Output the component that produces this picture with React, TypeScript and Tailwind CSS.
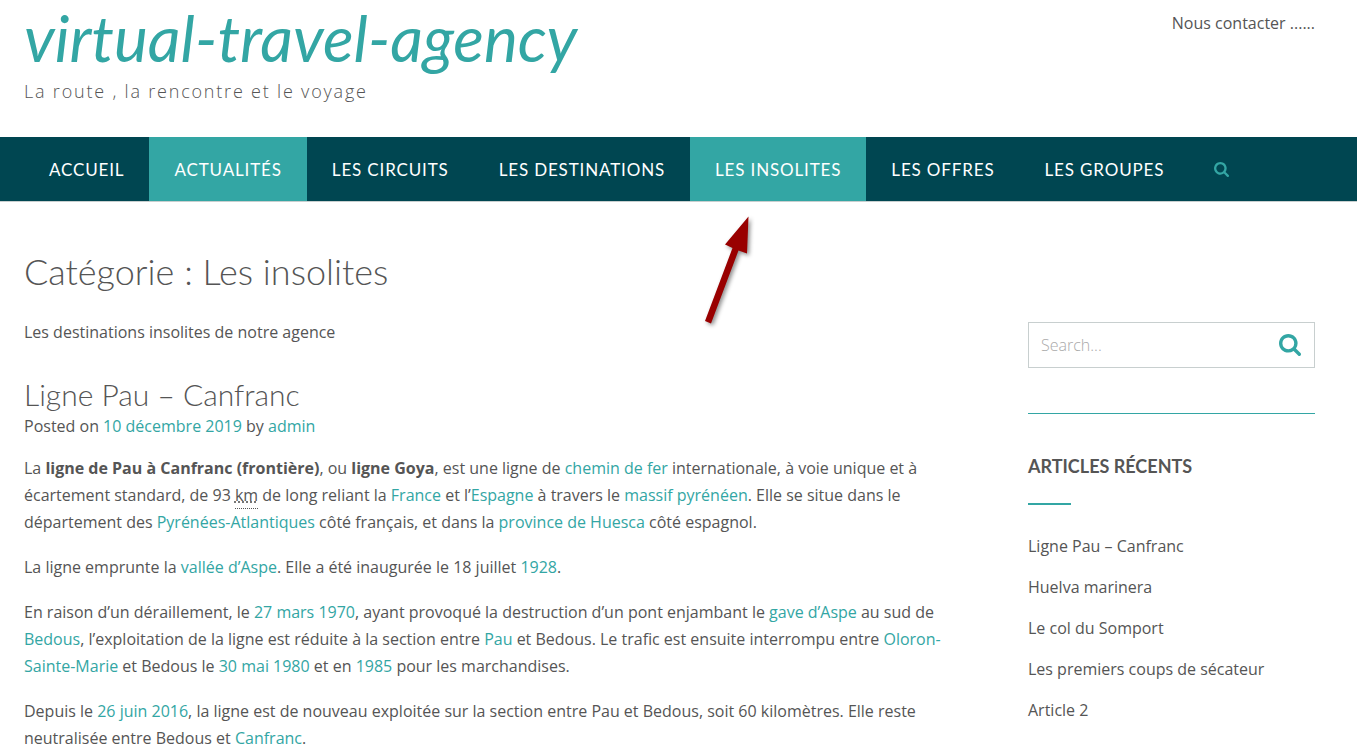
import type { ReactNode } from 'react'
import { clsx } from 'clsx'

const menu = [
  { label: 'Accueil', active: false },
  { label: 'Actualités', active: true },
  { label: 'Les circuits', active: false },
  { label: 'Les destinations', active: false },
  { label: 'Les insolites', active: true },
  { label: 'Les offres', active: false },
  { label: 'Les groupes', active: false },
]

const recentPosts = [
  'Ligne Pau – Canfranc',
  'Huelva marinera',
  'Le col du Somport',
  'Les premiers coups de sécateur',
  'Article 2',
]

function SearchIcon({ className }: { className?: string }) {
  return (
    <svg className={className} viewBox="64 128 1664 1664" fill="currentColor" aria-hidden="true">
      <path d="M1216 832q0-185-131.5-316.5t-316.5-131.5-316.5 131.5-131.5 316.5 131.5 316.5 316.5 131.5 316.5-131.5 131.5-316.5zm512 832q0 52-38 90t-90 38q-54 0-90-38l-343-342q-179 124-399 124-143 0-273.5-55.5t-225-150-150-225-55.5-273.5 55.5-273.5 150-225 225-150 273.5-55.5 273.5 55.5 225 150 150 225 55.5 273.5q0 220-124 399l343 343q37 37 37 90z" />
    </svg>
  )
}

function Arrow() {
  return (
    <svg
      className="pointer-events-none absolute top-[213px] left-[698px] h-[116px] w-[60px] drop-shadow-[2px_2px_2px_rgba(0,0,0,0.45)]"
      viewBox="698 213 60 116"
      fill="#990000"
      aria-hidden="true"
    >
      <path d="M748.5 216.5 L747 253.5 L738.5 250.5 L711 323.5 L705 321 L732.5 248 L725 244.5 Z" />
    </svg>
  )
}

function Link({ children }: { children: ReactNode }) {
  return (
    <a href="#" className="text-[#33a6a4] hover:underline">
      {children}
    </a>
  )
}

function Header() {
  return (
    <header>
      <div className="flex items-start justify-between pt-1 pr-[42px] pb-[31px] pl-6">
        <div>
          <h1 className="font-['Lato',sans-serif] text-[64px] leading-[68px] text-[#33a6a4] italic">
            <a href="#">virtual-travel-agency</a>
          </h1>
          <p className="mt-[5px] text-[18px] leading-[29px] font-light tracking-widest">
            La route , la rencontre et le voyage
          </p>
        </div>
        <p className="pt-[6px]">Nous contacter ......</p>
      </div>
      <nav className="flex h-[65px] border-b border-[#c8cfcf] bg-[#004651] pl-6">
        <ul className="flex font-['Lato',sans-serif] text-[17px] tracking-wider text-white uppercase">
          {menu.map((item) => (
            <li key={item.label}>
              <a
                href="#"
                className={clsx('flex h-full items-center px-[25px] whitespace-nowrap', item.active && 'bg-[#33a6a4]')}
              >
                {item.label}
              </a>
            </li>
          ))}
        </ul>
        <button type="button" aria-label="Rechercher" className="px-[25px] text-[#33a6a4]">
          <SearchIcon className="size-[15px]" />
        </button>
      </nav>
    </header>
  )
}

function Article() {
  return (
    <article className="mt-[30px]">
      <h2 className="font-['Lato',sans-serif] text-[30px] leading-9 font-light">Ligne Pau – Canfranc</h2>
      <p className="mt-px">
        Posted on <Link>10 décembre 2019</Link> by <Link>admin</Link>
      </p>
      <div className="mt-[15px] flex flex-col gap-[18px]">
        <p>
          La <strong className="font-bold">ligne de Pau à Canfranc (frontière)</strong>, ou{' '}
          <strong className="font-bold">ligne Goya</strong>, est une ligne de <Link>chemin de fer</Link>{' '}
          internationale, à voie unique et à écartement standard, de 93{' '}
          <abbr title="kilomètre" className="border-b border-dotted border-[#555] pb-[2px]">km</abbr> de long reliant
          la <Link>France</Link> et l’<Link>Espagne</Link> à travers le <Link>massif pyrénéen</Link>. Elle se situe
          dans le département des <Link>Pyrénées-Atlantiques</Link> côté français, et dans la{' '}
          <Link>province de Huesca</Link> côté espagnol.
        </p>
        <p>
          La ligne emprunte la <Link>vallée d’Aspe</Link>. Elle a été inaugurée le 18 juillet <Link>1928</Link>.
        </p>
        <p>
          En raison d’un déraillement, le <Link>27 mars 1970</Link>, ayant provoqué la destruction d’un pont
          enjambant le <Link>gave d’Aspe</Link> au sud de <Link>Bedous</Link>, l’exploitation de la ligne est
          réduite à la section entre <Link>Pau</Link> et Bedous. Le trafic est ensuite interrompu entre{' '}
          <Link>Oloron-Sainte-Marie</Link> et Bedous le <Link>30 mai 1980</Link> et en <Link>1985</Link> pour les
          marchandises.
        </p>
        <p>
          Depuis le <Link>26 juin 2016</Link>, la ligne est de nouveau exploitée sur la section entre Pau et
          Bedous, soit 60 kilomètres. Elle reste neutralisée entre Bedous et <Link>Canfranc</Link>.
        </p>
      </div>
    </article>
  )
}

function Sidebar() {
  return (
    <aside className="w-[287px] shrink-0 pt-[71px]">
      <form role="search" className="flex h-[46px] items-center border border-[#c8cfcf] pr-[13px] pl-3">
        <input
          type="search"
          aria-label="Search"
          placeholder="Search..."
          className="min-w-0 flex-1 font-light outline-none placeholder:text-[#aaa]"
        />
        <button type="submit" aria-label="Search" className="text-[#33a6a4]">
          <SearchIcon className="size-[22px]" />
        </button>
      </form>
      <hr className="mt-[45px] border-[#33a6a4]" />
      <h3 className="mt-[39px] font-['Lato',sans-serif] text-[18px] leading-[27px] font-bold uppercase">
        Articles récents
      </h3>
      <div className="mt-[23px] h-[2px] w-[43px] bg-[#33a6a4]" />
      <ul className="mt-7 flex flex-col gap-[14px]">
        {recentPosts.map((post) => (
          <li key={post}>
            <a href="#">{post}</a>
          </li>
        ))}
      </ul>
    </aside>
  )
}

export default function App() {
  return (
    <div className="relative min-h-screen bg-white font-['Open_Sans',sans-serif] text-[16px] leading-[27px] text-[#555]">
      <Header />
      <div className="flex gap-20 pt-[49px] pr-[42px] pl-6">
        <main className="min-w-0 flex-1">
          <h1 className="font-['Lato',sans-serif] text-[36px] leading-10 font-light">Catégorie : Les insolites</h1>
          <p className="mt-7">Les destinations insolites de notre agence</p>
          <Article />
        </main>
        <Sidebar />
      </div>
      <Arrow />
    </div>
  )
}
